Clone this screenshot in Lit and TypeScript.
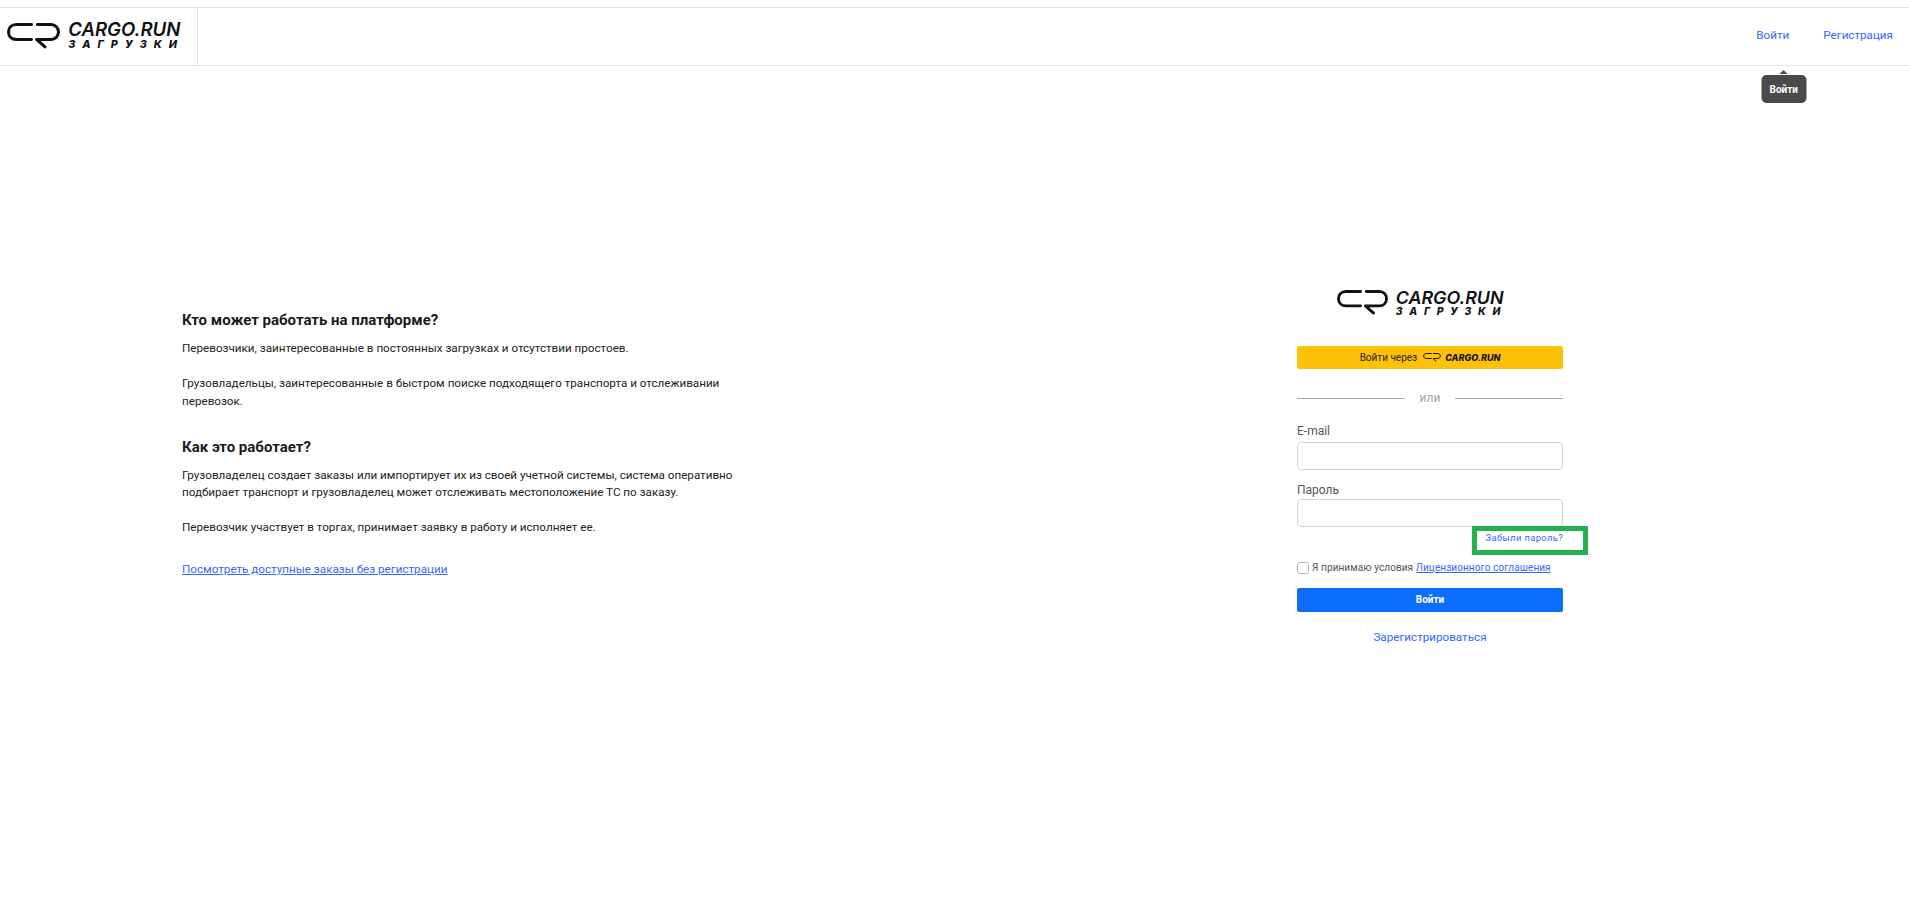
import { LitElement, html, css, svg } from "lit";
import { customElement } from "lit/decorators.js";

const mark = svg`<path d="M24.500 1.500H9.500C4.500 1.500 1.500 4.800 1.500 9s3 7.500 8 7.500H24.500" fill="none" stroke="#111" stroke-width="3" stroke-linecap="round"/><path d="M30.500 1.500H44c4.500 0 7.500 3.300 7.500 7.500s-3 7.500 -7.500 7.500H29.500l8.500 7.500" fill="none" stroke="#111" stroke-width="3" stroke-linecap="round" stroke-linejoin="round"/>`;

@customElement("cargo-logo")
class CargoLogo extends LitElement {
  static styles = css`
    :host { display: inline-flex; align-items: center; gap: 0.44em; color: #111; font-size: 18.6px; line-height: 1; }
    svg { width: 2.85em; height: 1.45em; display: block; flex: none; }
    .t { display: flex; flex-direction: column; font-family: Inter, "Liberation Sans", sans-serif; font-style: italic; font-weight: 600; }
    .a { font-size: 1em; line-height: 0.95em; white-space: nowrap; }
    .b { font-size: 0.58em; line-height: 1.15em; letter-spacing: 0.65em; font-weight: 800; white-space: nowrap; }
  `;
  render() {
    return html`<svg viewBox="0 0 53 27">${mark}</svg><div class="t"><span class="a">CARGO.RUN</span><span class="b">ЗАГРУЗКИ</span></div>`;
  }
}

@customElement("app-root")
class AppRoot extends LitElement {
  static styles = css`
    :host { display: block; min-height: 913px; background: #fff; font-family: Roboto, "Liberation Sans", sans-serif; color: #212529; padding-top: 7px; box-sizing: border-box; }
    a { color: #3366ff; text-decoration: none; }
    header { height: 59px; box-sizing: border-box; border-top: 1px solid #e2e2e2; border-bottom: 1px solid #e2e2e2; display: flex; align-items: center; justify-content: space-between; }
    .brand { height: 100%; width: 198px; box-sizing: border-box; border-right: 1px solid #e2e2e2; padding-left: 7px; display: flex; align-items: center; }
    nav { display: flex; gap: 34px; padding-right: 16px; font-size: 11.670px; line-height: 16px; margin-top: -4px; }
    .navitem { position: relative; }
    .tip { position: absolute; left: calc(50% + 11px); top: 48px; transform: translateX(-50%); background: #4a4a4a; color: #fff; font-size: 10px; font-weight: 700; border-radius: 5px; width: 45px; height: 28px; box-sizing: border-box; padding-top: 2px; display: flex; align-items: center; justify-content: center; }
    .tip::before { content: ""; position: absolute; top: -5px; left: 50%; margin-left: -4px; border: 4px solid transparent; border-top: 0; border-bottom: 4px solid #4a4a4a; }
    main { display: flex; justify-content: space-between; padding: 223px 346px 0 182px; }
    .info { width: 580px; padding-top: 21px; font-size: 11.670px; line-height: 17.500px; color: #222; }
    h2 { font-size: 15px; line-height: 20px; font-weight: 700; margin: 0 0 10px; color: #1a1a1a; }
    p { margin: 0 0 17.500px; }
    h2.second { margin-top: 26.500px; }
    .info a { display: inline-block; margin-top: 7px; text-decoration: underline; }
    .form { width: 266px; display: flex; flex-direction: column; }
    .flogo { align-self: center; font-size: 17.900px; margin-right: 16px; }
    .yellow { margin-top: 28px; height: 23px; background: #ffc107; border-radius: 2px; display: flex; align-items: center; justify-content: center; gap: 6px; font-size: 10px; color: #222; }
    .yellow svg { width: 18px; height: 9px; display: block; }
    .yellow b { font-family: Inter, "Liberation Sans", sans-serif; font-style: italic; font-size: 9px; font-weight: 800; color: #111; }
    .yellow .m { display: flex; gap: 4px; align-items: center; }
    .or { margin: 22px 0 17px; display: flex; align-items: center; gap: 15px; font-size: 12px; line-height: 15px; color: #a5a5a5; }
    .or::before, .or::after { content: ""; flex: 1; border-top: 1px solid #aaa; }
    label { display: block; font-size: 12px; line-height: 16px; color: #555; margin-bottom: 3px; }
    input[type="text"], input[type="password"] { display: block; box-sizing: border-box; width: 100%; height: 28px; border: 1px solid #ced4da; border-radius: 4px; background: #fff; margin: 0; }
    label.pw { margin-top: 12px; margin-bottom: 1px; }
    .forgot { align-self: flex-end; margin: 5px 0 0 0; font-size: 9.330px; line-height: 12px; letter-spacing: 0.4px; position: relative; }
    .forgot::after { content: ""; position: absolute; left: -13px; top: -6px; right: -25px; bottom: -11px; border: 5px solid #22b14c; }
    .terms { margin-top: 17px; display: flex; align-items: center; gap: 3px; font-size: 10px; line-height: 14px; color: #555; letter-spacing: 0.1px; }
    .terms input { margin: 0; width: 12px; height: 12px; flex: none; appearance: none; border: 1px solid #bbb; border-radius: 3px; background: #fff; }
    .terms a { text-decoration: underline; }
    .login { margin-top: 13px; height: 24px; border: 0; border-radius: 2px; background: #0d6efd; color: #fff; font: 700 10px Roboto, sans-serif; }
    .reg { margin-top: 17px; text-align: center; font-size: 11.670px; line-height: 16px; }
  `;
  render() {
    return html`
      <header>
        <div class="brand"><cargo-logo></cargo-logo></div>
        <nav>
          <div class="navitem"><a href="#">Войти</a><div class="tip">Войти</div></div>
          <a href="#">Регистрация</a>
        </nav>
      </header>
      <main>
        <section class="info">
          <h2>Кто может работать на платформе?</h2>
          <p>Перевозчики, заинтересованные в постоянных загрузках и отсутствии простоев.</p>
          <p>Грузовладельцы, заинтересованные в быстром поиске подходящего транспорта и отслеживании<br />перевозок.</p>
          <h2 class="second">Как это работает?</h2>
          <p>Грузовладелец создает заказы или импортирует их из своей учетной системы, система оперативно<br />подбирает транспорт и грузовладелец может отслеживать местоположение ТС по заказу.</p>
          <p>Перевозчик участвует в торгах, принимает заявку в работу и исполняет ее.</p>
          <a href="#">Посмотреть доступные заказы без регистрации</a>
        </section>
        <section class="form">
          <cargo-logo class="flogo"></cargo-logo>
          <div class="yellow"><span>Войти через</span><span class="m"><svg viewBox="0 0 53 27">${mark}</svg><b>CARGO.RUN</b></span></div>
          <div class="or">или</div>
          <label>E-mail</label>
          <input type="text" />
          <label class="pw">Пароль</label>
          <input type="password" />
          <a class="forgot" href="#">Забыли пароль?</a>
          <div class="terms"><input type="checkbox" /><span>Я принимаю условия <a href="#">Лицензионного соглашения</a></span></div>
          <button class="login">Войти</button>
          <a class="reg" href="#">Зарегистрироваться</a>
        </section>
      </main>
    `;
  }
}
